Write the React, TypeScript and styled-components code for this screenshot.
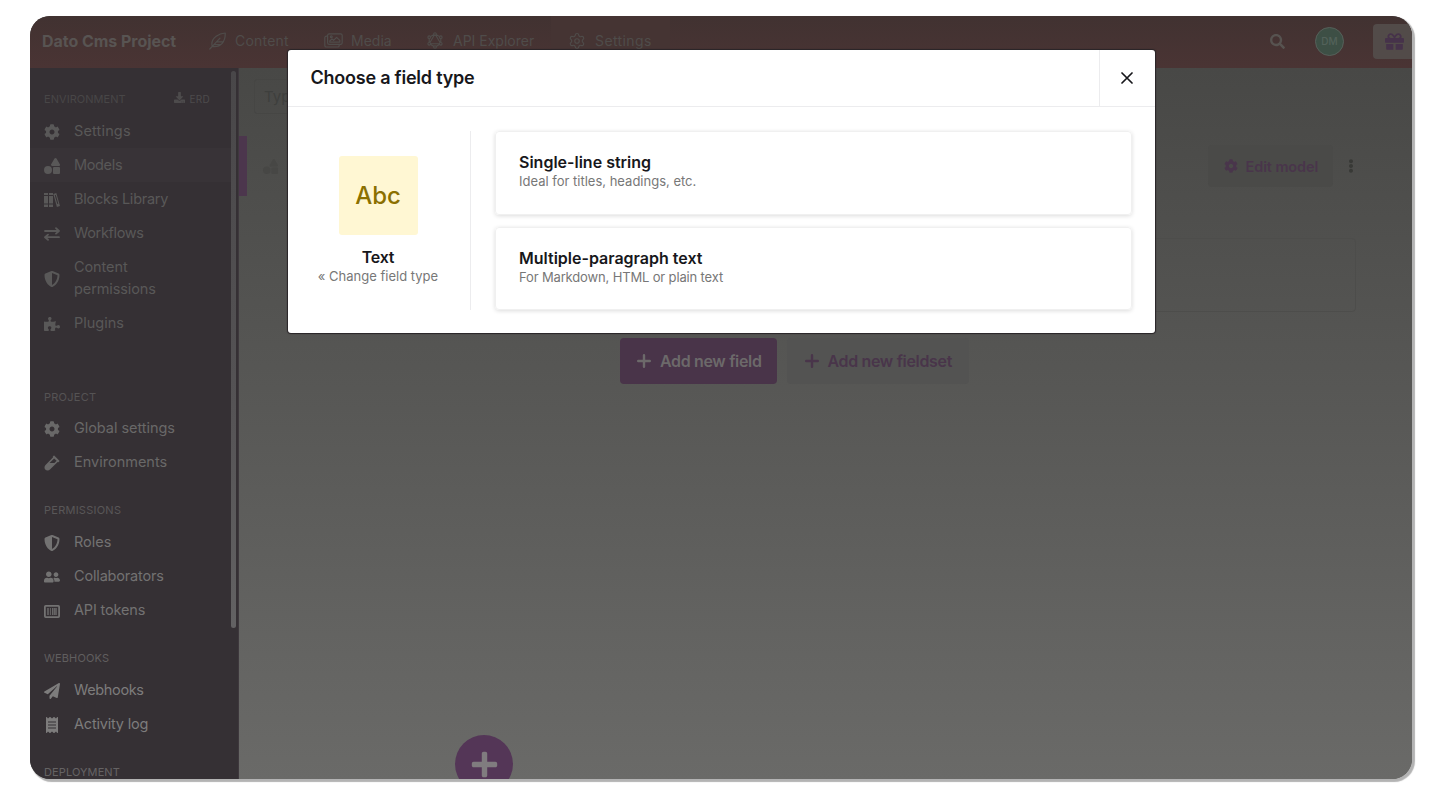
import React from "react";
import styled, { createGlobalStyle } from "styled-components";
import {
  FaCog, FaShapes, FaShieldAlt, FaPuzzlePiece, FaVial, FaUserFriends,
  FaPaperPlane, FaReceipt, FaDownload, FaSearch, FaGift, FaEllipsisV, FaPlus,
} from "react-icons/fa";
import { Settings } from "lucide-react";

const Global = createGlobalStyle`
  * { box-sizing: border-box; }
  body { margin: 0; background: #fff; overflow: hidden; font-family: Inter, "Liberation Sans", sans-serif; }
`;

const Page = styled.div`
  height: 799px;
  padding: 16px 28px 20px 30px;
`;

const Frame = styled.div`
  position: relative;
  display: flex;
  flex-direction: column;
  width: 1382px;
  height: 763px;
  border-radius: 20px;
  overflow: hidden;
  background: #4a4a47;
`;

const FrameShadow = styled.div`
  width: 1382px;
  height: 763px;
  border-radius: 20px;
  box-shadow: 2px 2px 1px 1px #b3b3b3;
`;

const Header = styled.header`
  display: flex;
  align-items: center;
  flex: none;
  height: 52px;
  padding-left: 12px;
  background: linear-gradient(#413231, #4a3434);
  color: #4f4c4a;
`;

const ProjectName = styled.div`
  width: 157px;
  padding-bottom: 2px;
  color: #585452;
  font-size: 16px;
  font-weight: 700;
  letter-spacing: -0.04px;
  white-space: nowrap;
`;

const NavItem = styled.div<{ $width: number; $gap: number; $active?: boolean; $ls?: number }>`
  display: flex;
  align-items: center;
  gap: ${(p) => p.$gap}px;
  width: ${(p) => p.$width}px;
  height: 52px;
  padding: 0 0 3px ${(p) => (p.$active ? 17 : 10)}px;
  font-size: 14px;
  letter-spacing: ${(p) => p.$ls ?? 0}px;
  white-space: nowrap;
  background: ${(p) => (p.$active ? "#453433" : "transparent")};
  svg { flex: none; }
`;

const HeaderTools = styled.div`
  display: flex;
  align-items: center;
  margin-left: auto;
  padding-bottom: 1px;
  color: #575350;
`;

const Avatar = styled.div`
  width: 29px;
  height: 29px;
  margin: 0 29px 0 30px;
  border: 1.5px solid #57605a;
  border-radius: 50%;
  background: #3d4f45;
  color: #53625a;
  font-size: 10px;
  font-weight: 500;
  line-height: 26px;
  text-align: center;
`;

const GiftButton = styled.div`
  display: flex;
  align-items: center;
  width: 39px;
  height: 35px;
  padding-left: 12px;
  border-radius: 4px 0 0 4px;
  background: #524b49;
  color: #46324a;
`;

const Body = styled.div`
  display: flex;
  flex: 1;
  min-height: 0;
`;

const Sidebar = styled.aside`
  display: flex;
  flex: none;
  width: 209px;
  overflow: hidden;
  background: #353034;
  border-right: 1px solid #3e383d;
`;

const SideContent = styled.div`
  flex: none;
  width: 201px;
  padding-top: 21px;
`;

const ScrollThumb = styled.div`
  width: 5px;
  height: 557px;
  margin-top: 3px;
  border-radius: 3px;
  background: linear-gradient(#494749, #555355 60%, #636263);
`;

const Section = styled.section<{ $tone: string; $title: string; $after: number }>`
  margin-bottom: ${(p) => p.$after}px;
  color: ${(p) => p.$tone};
  h3 { color: ${(p) => p.$title}; }
`;

const SectionHead = styled.div`
  display: flex;
  align-items: center;
  justify-content: space-between;
  height: 20px;
  margin-bottom: 4.5px;
  padding: 0 21px 0 14px;
`;

const SectionTitle = styled.h3<{ $ls?: number }>`
  margin: 0;
  padding-top: 0.5px;
  font-size: 11px;
  font-weight: 400;
  letter-spacing: ${(p) => p.$ls ?? 0}px;
`;

const ErdLink = styled.div`
  display: flex;
  align-items: center;
  gap: 5px;
  color: #4d4b4c;
  font-size: 10px;
  letter-spacing: 0.25px;
  svg { margin-bottom: 3px; }
`;

const SideRow = styled.div<{ $active?: boolean; $ls?: number }>`
  display: flex;
  align-items: center;
  gap: 14px;
  min-height: 34.2px;
  padding: 6.2px 40px 6.2px 14px;
  font-size: 14.5px;
  line-height: 21.8px;
  letter-spacing: ${(p) => p.$ls ?? 0}px;
  background: ${(p) => (p.$active ? "#383337" : "transparent")};
  svg { flex: none; margin-top: 2px; }
`;

const Main = styled.main`
  position: relative;
  display: flex;
  flex-direction: column;
  flex: 1;
  background: linear-gradient(#484846, #565654 42%, #6a6a68);
`;

const SearchRow = styled.div`
  height: 68px;
  padding: 11px 0 0 15px;
`;

const SearchBox = styled.div`
  width: 220px;
  height: 35px;
  padding-left: 9px;
  border: 1px solid #464644;
  border-radius: 3px;
  color: #3e3f3d;
  font-size: 15px;
  line-height: 33px;
`;

const ModelRow = styled.div`
  display: flex;
  align-items: center;
  height: 60px;
  color: #474745;
`;

const ActiveMark = styled.div`
  width: 8px;
  height: 60px;
  margin-right: 16px;
  background: #4c364d;
`;

const EditButton = styled.div`
  display: flex;
  align-items: center;
  gap: 8px;
  width: 125px;
  height: 42px;
  margin-left: auto;
  padding-left: 15.5px;
  border-radius: 4px;
  background: #4a4a48;
  color: #49354b;
  font-size: 14.5px;
  font-weight: 600;
  letter-spacing: -0.1px;
  white-space: nowrap;
`;

const MoreButton = styled.div`
  display: flex;
  width: 79px;
  padding-left: 11px;
  color: #383936;
`;

const FieldCard = styled.div`
  height: 74px;
  margin: 42px 56px 0 48px;
  border: 1px solid #4d4d4b;
  border-radius: 4px;
`;

const FieldActions = styled.div`
  display: flex;
  gap: 10px;
  margin: 26px 0 0 381px;
`;

const FieldButton = styled.div<{ $primary?: boolean; $width: number }>`
  display: flex;
  align-items: center;
  gap: 9px;
  width: ${(p) => p.$width}px;
  height: 46px;
  padding: 0 0 1px ${(p) => (p.$primary ? 17 : 17.5)}px;
  border-radius: 4px;
  background: ${(p) => (p.$primary ? "#493449" : "#535352")};
  color: ${(p) => (p.$primary ? "#6c696a" : "#49354a")};
  font-size: 16px;
  font-weight: 600;
  letter-spacing: -0.34px;
  white-space: nowrap;
`;

const FloatingAdd = styled.div`
  position: absolute;
  left: 216px;
  top: 667px;
  display: flex;
  align-items: center;
  justify-content: center;
  width: 58px;
  height: 58px;
  border-radius: 50%;
  background: #543657;
  color: #807c7f;
`;

const Modal = styled.section`
  position: absolute;
  left: 257.5px;
  top: 34px;
  width: 867.5px;
  height: 282.5px;
  border-radius: 3px;
  background: #fff;
  box-shadow: 0 0 1px 1px #292427;
  color: #17171b;
`;

const ModalHeader = styled.div`
  display: flex;
  height: 57px;
  border-bottom: 1px solid #ececee;
`;

const ModalTitle = styled.h2`
  flex: 1;
  margin: 0;
  padding-left: 23px;
  font-size: 18px;
  font-weight: 600;
  line-height: 56px;
  letter-spacing: -0.23px;
`;

const CloseButton = styled.div`
  display: flex;
  align-items: center;
  justify-content: center;
  width: 56.5px;
  border-left: 1px solid #ececee;
`;

const ModalBody = styled.div`
  display: flex;
  padding: 24px 23px 0 0;
`;

const TypeSummary = styled.div`
  display: flex;
  flex-direction: column;
  align-items: center;
  width: 183px;
  height: 179px;
  padding: 25px 1px 0 0;
  border-right: 1px solid #ececee;
`;

const TypeTile = styled.div`
  width: 79px;
  height: 79px;
  margin-bottom: 12px;
  border-radius: 3px;
  background: #fff7d3;
  color: #8b7000;
  font-size: 24px;
  font-weight: 500;
  line-height: 80px;
  text-align: center;
`;

const Choices = styled.div`
  display: flex;
  flex-direction: column;
  flex: 1;
  gap: 12px;
  margin-left: 24px;
`;

const Choice = styled.div`
  height: 83.5px;
  padding: 20px 24px 0 23.5px;
  border: 1px solid #f0f0f0;
  border-radius: 4px;
  box-shadow: 0 1px 4px rgba(0, 0, 0, 0.14);
`;

const Name = styled.div<{ $ls?: number }>`
  font-size: 16px;
  font-weight: 600;
  line-height: 20px;
  letter-spacing: ${(p) => p.$ls ?? 0}px;
`;

const Hint = styled.div<{ $ls?: number }>`
  color: #777;
  font-size: 13px;
  line-height: 19px;
  letter-spacing: ${(p) => p.$ls ?? 0}px;
  white-space: nowrap;
`;

const LeafIcon = () => (
  <svg width="17" height="18" viewBox="0 0 17 18" fill="none" stroke="currentColor" strokeWidth="1.2" strokeLinecap="round" strokeLinejoin="round">
    <path d="M.8 17 11 6.2M3.2 14.4C2 9.5 4.2 6.4 7.2 4.2 10 2.2 13 1.3 16.2 1c.2 4.2-.7 7.6-3 10.3-2.4 2.7-5.4 3.8-10 3.1zM7.6 9.8h6.3M5.2 12.6h6" />
  </svg>
);

const ImagesIcon = () => (
  <svg width="19" height="15" viewBox="0 0 19 15" fill="none" stroke="currentColor" strokeWidth="1.2" strokeLinejoin="round">
    <rect x="3.6" y="0.8" width="14.6" height="10.6" rx="1.6" />
    <path d="M3.6 3.2H2.4A1.6 1.6 0 0 0 .8 4.8v7.6A1.6 1.6 0 0 0 2.4 14h11.2a1.6 1.6 0 0 0 1.6-1.6v-1M5.8 9.2V8l2.2-2.2 1.6 1.6 3-3 3.2 3v1.8z" />
    <circle cx="7.3" cy="3.8" r="0.9" />
  </svg>
);

const GraphIcon = () => (
  <svg width="16" height="17" viewBox="0 0 16 17" fill="none" stroke="currentColor" strokeWidth="1.1">
    <path d="M8 2 13.8 5.2v6.6L8 15 2.2 11.8V5.2zM8 2 13.8 11.8H2.2z" />
    <g fill="#443232">
      <circle cx="8" cy="2" r="1.3" /><circle cx="13.8" cy="5.2" r="1.3" />
      <circle cx="13.8" cy="11.8" r="1.3" /><circle cx="8" cy="15" r="1.3" />
      <circle cx="2.2" cy="11.8" r="1.3" /><circle cx="2.2" cy="5.2" r="1.3" />
    </g>
  </svg>
);

const BooksIcon = () => (
  <svg width="16" height="14" viewBox="0 0 16 14" fill="currentColor">
    <path d="M0 0h4v2H0zM0 3h4v7.5H0zM0 11.6h4V14H0zM5 0h4v2H5zM5 3h4v7.5H5zM5 11.6h4V14H5z" />
    <path fillRule="evenodd" d="m9.3.9 3-.8L16 13l-3.1.9zm1.5 1.4 2.5 8.7 1-.3-2.5-8.7z" />
  </svg>
);

const SwapIcon = () => (
  <svg width="16" height="14" viewBox="0 0 16 14" fill="none" stroke="currentColor" strokeWidth="1.8" strokeLinejoin="round" strokeLinecap="round">
    <path d="M1 4h14M12 1.2 15 4l-3 2.6M15 10.2H1M4 7.6l-3 2.6 3 2.6" />
  </svg>
);

const TokenIcon = () => (
  <svg width="16" height="13" viewBox="0 0 16 13" fill="none" stroke="currentColor">
    <rect x="0.9" y="0.9" width="14.2" height="11.2" rx="0.8" strokeWidth="1.8" />
    <path d="M4 3v7M8.8 3v7M12 3v7" strokeWidth="1.3" />
    <path d="M6.4 3v7M10.5 3v7" strokeWidth="0.8" />
  </svg>
);

const PlusIcon = () => (
  <svg width="14" height="14" viewBox="0 0 14 14" fill="none" stroke="currentColor" strokeWidth="2.4" strokeLinecap="round">
    <path d="M7 1.2v11.6M1.2 7h11.6" />
  </svg>
);

const CloseIcon = () => (
  <svg width="12" height="12" viewBox="0 0 12 12" stroke="#17171b" strokeWidth="1.7" strokeLinecap="round">
    <path d="m1 1 10 10M11 1 1 11" />
  </svg>
);

export default function App() {
  return (
    <Page>
      <Global />
      <FrameShadow>
        <Frame>
          <Header>
            <ProjectName>Dato Cms Project</ProjectName>
            <NavItem $width={115} $gap={9} $ls={0.2}><LeafIcon />Content</NavItem>
            <NavItem $width={103} $gap={8}><ImagesIcon />Media</NavItem>
            <NavItem $width={134} $gap={10}><GraphIcon />API Explorer</NavItem>
            <NavItem $width={119} $gap={9} $ls={0.4} $active><Settings size={18} strokeWidth={1.5} />Settings</NavItem>
            <HeaderTools>
              <FaSearch size={15} />
              <Avatar>DM</Avatar>
              <GiftButton><FaGift size={19} /></GiftButton>
            </HeaderTools>
          </Header>
          <Body>
            <Sidebar>
              <SideContent>
                <Section $tone="#595858" $title="#484647" $after={46}>
                  <SectionHead>
                    <SectionTitle $ls={0.05}>ENVIRONMENT</SectionTitle>
                    <ErdLink><FaDownload size={11} />ERD</ErdLink>
                  </SectionHead>
                  <SideRow $ls={0.15}><FaCog size={16} />Settings</SideRow>
                  <SideRow $active $ls={-0.35}><FaShapes size={16} />Models</SideRow>
                  <SideRow $ls={-0.25}><BooksIcon />Blocks Library</SideRow>
                  <SideRow $ls={-0.35}><SwapIcon />Workflows</SideRow>
                  <SideRow $ls={-0.1}><FaShieldAlt size={16} />Content permissions</SideRow>
                  <SideRow><FaPuzzlePiece size={16} />Plugins</SideRow>
                </Section>
                <Section $tone="#696868" $title="#555354" $after={20.8}>
                  <SectionHead><SectionTitle $ls={0.25}>PROJECT</SectionTitle></SectionHead>
                  <SideRow $ls={-0.05}><FaCog size={16} />Global settings</SideRow>
                  <SideRow><FaVial size={16} />Environments</SideRow>
                </Section>
                <Section $tone="#737272" $title="#595758" $after={20.8}>
                  <SectionHead><SectionTitle $ls={0.25}>PERMISSIONS</SectionTitle></SectionHead>
                  <SideRow><FaShieldAlt size={16} />Roles</SideRow>
                  <SideRow $ls={-0.17}><FaUserFriends size={16} />Collaborators</SideRow>
                  <SideRow $ls={-0.17}><TokenIcon />API tokens</SideRow>
                </Section>
                <Section $tone="#7d7c7c" $title="#605e5f" $after={20.8}>
                  <SectionHead><SectionTitle $ls={0.15}>WEBHOOKS</SectionTitle></SectionHead>
                  <SideRow $ls={-0.35}><FaPaperPlane size={16} />Webhooks</SideRow>
                  <SideRow $ls={-0.2}><FaReceipt size={16} />Activity log</SideRow>
                </Section>
                <Section $tone="#7d7c7c" $title="#656364" $after={0}>
                  <SectionHead><SectionTitle $ls={0.1}>DEPLOYMENT</SectionTitle></SectionHead>
                </Section>
              </SideContent>
              <ScrollThumb />
            </Sidebar>
            <Main>
              <SearchRow><SearchBox>Type</SearchBox></SearchRow>
              <ModelRow>
                <ActiveMark />
                <FaShapes size={15} />
                <EditButton><FaCog size={14} />Edit model</EditButton>
                <MoreButton><FaEllipsisV size={14} /></MoreButton>
              </ModelRow>
              <FieldCard />
              <FieldActions>
                <FieldButton $primary $width={157}><PlusIcon />Add new field</FieldButton>
                <FieldButton $width={182}><PlusIcon />Add new fieldset</FieldButton>
              </FieldActions>
              <FloatingAdd><FaPlus size={29} /></FloatingAdd>
            </Main>
          </Body>
          <Modal>
            <ModalHeader>
              <ModalTitle>Choose a field type</ModalTitle>
              <CloseButton><CloseIcon /></CloseButton>
            </ModalHeader>
            <ModalBody>
              <TypeSummary>
                <TypeTile>Abc</TypeTile>
                <Name $ls={-0.2}>Text</Name>
                <Hint>« Change field type</Hint>
              </TypeSummary>
              <Choices>
                <Choice><Name>Single-line string</Name><Hint>Ideal for titles, headings, etc.</Hint></Choice>
                <Choice><Name>Multiple-paragraph text</Name><Hint $ls={-0.15}>For Markdown, HTML or plain text</Hint></Choice>
              </Choices>
            </ModalBody>
          </Modal>
        </Frame>
      </FrameShadow>
    </Page>
  );
}
